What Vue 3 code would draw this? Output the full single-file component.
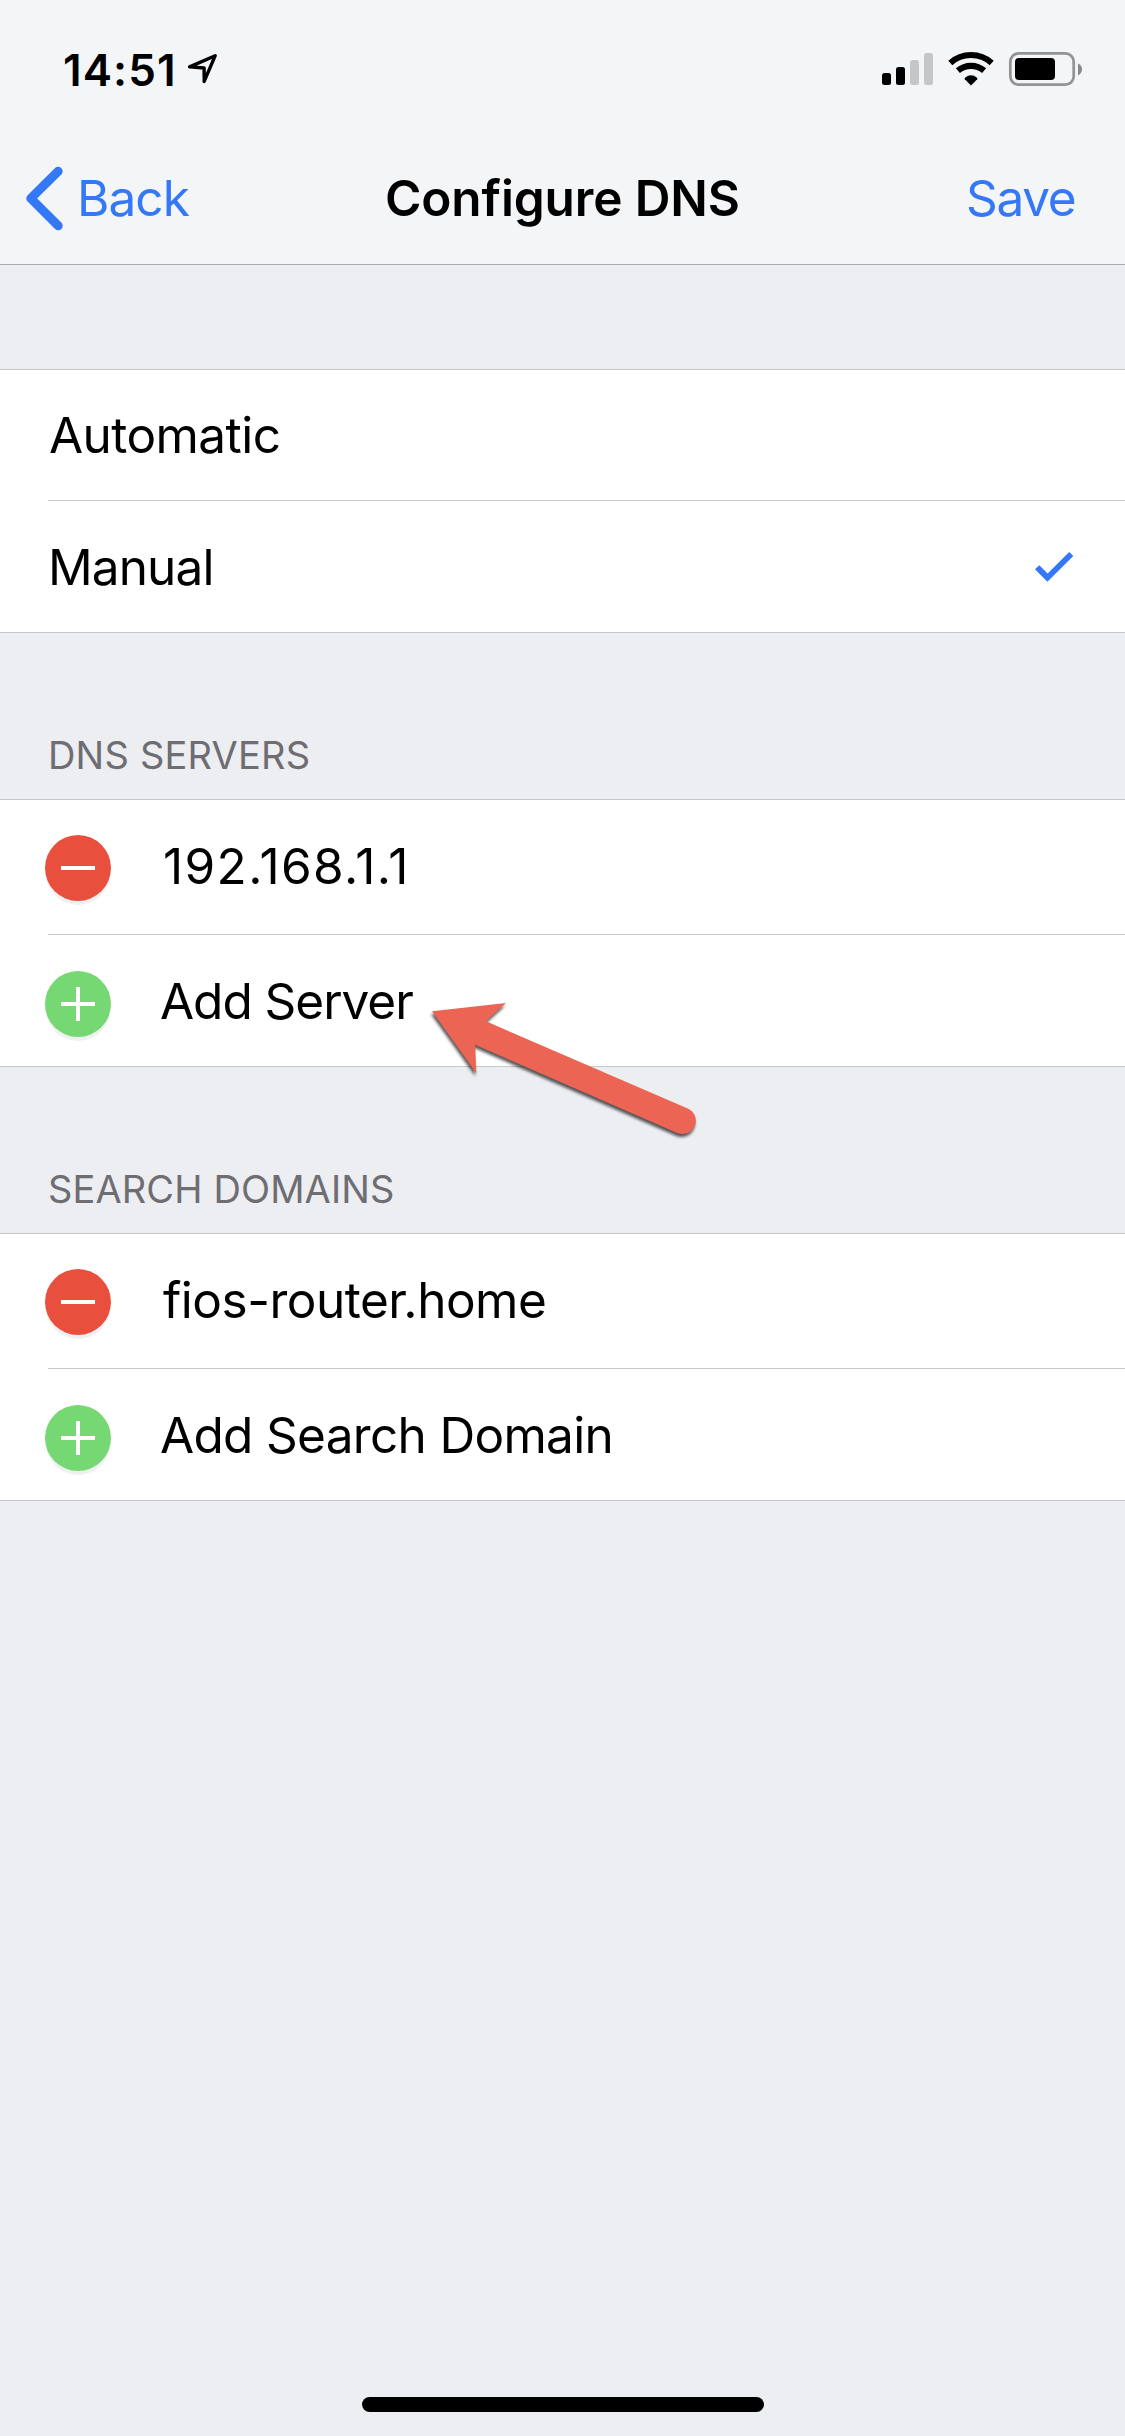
<script setup>
const modes = [
  { label: 'Automatic', cls: 't-automatic', selected: false },
  { label: 'Manual', cls: 't-manual', selected: true },
]
const sections = [
  {
    title: 'DNS SERVERS',
    cls: 'h-servers',
    rows: [
      { label: '192.168.1.1', kind: 'remove', cls: 't-ip' },
      { label: 'Add Server', kind: 'add', cls: 't-server' },
    ],
  },
  {
    title: 'SEARCH DOMAINS',
    cls: 'h-domains',
    rows: [
      { label: 'fios-router.home', kind: 'remove', cls: 't-router' },
      { label: 'Add Search Domain', kind: 'add', cls: 't-domain' },
    ],
  },
]
</script>

<template>
  <div class="screen">
    <header class="top">
      <div class="status">
        <span class="time">14:51</span>
        <svg class="location" width="32" height="32" viewBox="0 0 32 32">
          <path d="M2.6 13.9 28.2 2.7 17.2 28.4 17.1 15Z" fill="none" stroke="#000" stroke-width="3.4" stroke-linejoin="round" />
        </svg>
        <svg class="indicators" width="203" height="36" viewBox="0 0 203 36">
          <rect x="2" y="22" width="9" height="12" rx="2.5" />
          <rect x="16" y="16" width="9" height="18" rx="2.5" />
          <rect x="30" y="9" width="9" height="25" rx="2.5" fill="#c5c6c8" />
          <rect x="44" y="2" width="9" height="32" rx="2.5" fill="#c5c6c8" />
          <g fill="none" stroke="#000">
            <path d="M70.3 11.9A31 31 0 0 1 111.7 11.9" stroke-width="6" />
            <path d="M77.9 19.6A20.2 20.2 0 0 1 104.1 19.6" stroke-width="6.2" />
          </g>
          <path d="M91 34.5 84.8 28.2Q84.2 27.4 85 26.7Q91 21.8 97 26.7Q97.8 27.4 97.2 28.2Z" />
          <rect x="130.3" y="2.3" width="63.4" height="31.4" rx="8.5" fill="none" stroke="#929395" stroke-width="2.7" />
          <rect x="135" y="7" width="40" height="22" rx="4" />
          <path d="M198 12.5Q202 14.5 202 18Q202 22 198 24.5Z" fill="#88898b" />
        </svg>
      </div>
      <nav class="nav">
        <a class="back">
          <svg width="40" height="66" viewBox="0 0 40 66">
            <path d="M34.2 6.3 6.8 33.4 34.2 60.7" fill="none" stroke="#3478f6" stroke-width="9" stroke-linecap="round" stroke-linejoin="round" />
          </svg>
          <span>Back</span>
        </a>
        <h1 class="title">Configure DNS</h1>
        <a class="save">Save</a>
      </nav>
    </header>

    <section class="group modes">
      <div v-for="m in modes" :key="m.label" class="row">
        <span class="label" :class="m.cls">{{ m.label }}</span>
        <svg v-if="m.selected" class="check" width="40" height="32" viewBox="0 0 40 32">
          <path d="M1 18.3 5.3 14.2 13.6 22.4 35.2 1 39.3 4.9 13.4 30.8Z" fill="#3478f6" />
        </svg>
      </div>
    </section>

    <template v-for="(s, i) in sections" :key="s.title">
      <h2 class="heading" :class="s.cls">{{ s.title }}</h2>
      <section class="group">
        <div v-for="r in s.rows" :key="r.label" class="row" :class="r.kind">
          <span class="badge">
            <svg width="66" height="66" viewBox="0 0 66 66">
              <path :d="r.kind === 'add' ? 'M16 33H50M33 16V50' : 'M16 33H50'" stroke="#fff" stroke-width="4" />
            </svg>
          </span>
          <span class="label" :class="r.cls">{{ r.label }}</span>
        </div>
        <svg v-if="i === 0" class="pointer" width="280" height="150" viewBox="0 0 280 150">
          <path d="M12 11.3 86 3 66 21.3 268.3 108.7A13 13 0 0 1 256.7 132.7L55 44.7 56.3 73.3Z" fill="#ec6453" />
        </svg>
      </section>
    </template>

    <div class="home"></div>
  </div>
</template>

<style>
body {
  background: #edeef2;
}
</style>

<style scoped>
.screen {
  width: 1125px;
  height: 2436px;
  display: flex;
  flex-direction: column;
  background: #edeef2;
  color: #000;
  font-family: Inter, "Liberation Sans", sans-serif;
  font-size: 49.5px;
  line-height: 60px;
  overflow: hidden;
}
.top {
  box-sizing: border-box;
  height: 265px;
  flex: none;
  background: #f4f5f7;
  border-bottom: 1px solid #a9aaae;
}
.status {
  box-sizing: border-box;
  height: 132px;
  padding: 7px 42px 0 63px;
  display: flex;
  align-items: center;
}
.time {
  width: 124px;
  font-size: 44px;
  font-weight: 600;
  letter-spacing: 1.1px;
}
.time,
.location,
.indicators {
  flex: none;
}
.location {
  margin-top: -1px;
}
.indicators {
  margin-left: auto;
  margin-top: -1px;
}
.nav {
  height: 132px;
  display: grid;
  grid-template-columns: 361px 1fr 361px;
  align-items: center;
}
.back {
  display: flex;
  align-items: center;
  padding-left: 24px;
  color: #3478f6;
}
.back span {
  margin-left: 13px;
  letter-spacing: -0.93px;
}
.title {
  margin: 0;
  font-size: 49.5px;
  font-weight: 600;
  letter-spacing: -0.13px;
  padding-left: 24px;
  white-space: nowrap;
}
.save {
  padding-left: 202px;
  color: #3478f6;
  letter-spacing: -1.3px;
}
.group {
  position: relative;
  flex: none;
  background: #fff;
  border-top: 1px solid #c8c8cb;
  border-bottom: 1px solid #c8c8cb;
}
.modes {
  margin-top: 104px;
}
.row {
  height: 131px;
  display: flex;
  align-items: center;
}
.row:first-child {
  height: 130px;
}
.row.remove:first-child {
  height: 134px;
}
.row + .row {
  background: linear-gradient(#c8c8cb, #c8c8cb) 48px 0 / 100% 1px no-repeat;
  height: 132px;
}
.label {
  white-space: nowrap;
  margin-left: 48px;
}
.check {
  margin-left: auto;
  margin-right: 51px;
  margin-top: 2px;
}
.badge {
  width: 66px;
  height: 66px;
  flex: none;
  margin: 2px 0 0 45px;
  border-radius: 50%;
  background: #e94f3d;
  box-shadow: 0 5px 1px -1px #eff0f2;
}
.badge svg {
  display: block;
}
.add .badge {
  margin-top: 8px;
  background: #76d872;
}
.remove .label {
  margin: -2px 0 0 52px;
}
.add .label {
  margin: 2px 0 0 49px;
}
.t-automatic {
  letter-spacing: -0.56px;
  margin-left: 49px;
}
.t-manual {
  letter-spacing: -0.88px;
  margin-top: 2px;
}
.t-ip {
  letter-spacing: 1.37px;
}
.t-server {
  letter-spacing: -1.03px;
}
.t-router {
  letter-spacing: -0.49px;
}
.t-domain {
  letter-spacing: -0.68px;
}
.heading {
  box-sizing: border-box;
  height: 166px;
  margin: 0;
  padding: 102px 0 0 48px;
  flex: none;
  font-size: 38px;
  line-height: 41px;
  font-weight: 400;
  color: #6d6d72;
}
.h-servers {
  letter-spacing: 0.2px;
}
.h-domains {
  letter-spacing: 0.12px;
}
.pointer {
  position: absolute;
  left: 420px;
  top: 200px;
  z-index: 1;
  filter: drop-shadow(-1px 3px 1.5px rgba(0, 0, 0, 0.65));
}
.home {
  width: 402px;
  height: 15px;
  margin: auto auto 24px 362px;
  border-radius: 7.5px;
  background: #000;
}
</style>
